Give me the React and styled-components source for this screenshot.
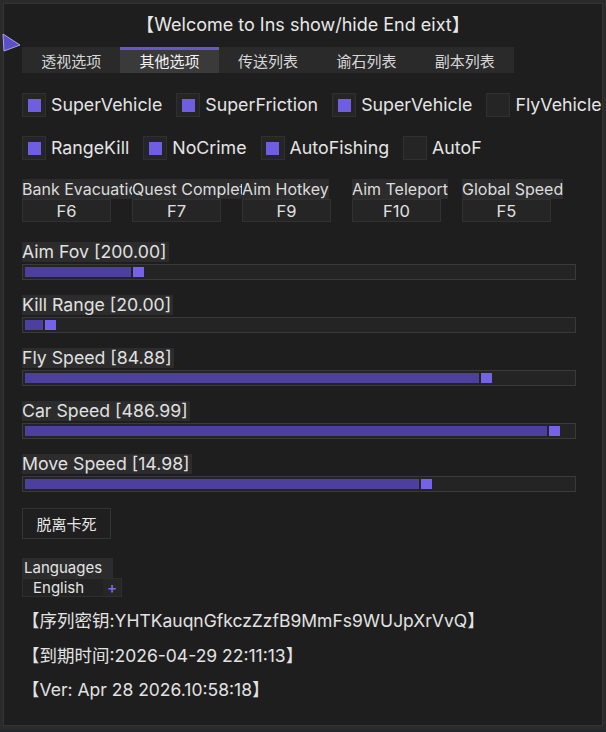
import { createGlobalStyle, styled } from 'styled-components'

const GlobalStyle = createGlobalStyle`
  html, body {
    margin: 0;
    padding: 0;
    background: #2a2a2a;
  }
  body {
    font-family: Inter, "Noto Sans CJK SC", sans-serif;
    color: #e4e4e4;
  }
`

const Screen = styled.div`
  position: relative;
  width: 606px;
  height: 732px;
  padding: 3px 3px 4px 3px;
  box-sizing: border-box;
  background: #2b2b2b;
  border-bottom: 2px solid #1b2a30;
`

const Window = styled.div`
  height: 100%;
  background: #1e1e1e;
  border: 1px solid #333;
  box-sizing: border-box;
  overflow: hidden;
  padding: 10px 0 0 18px;
  display: flex;
  flex-direction: column;
`

const Title = styled.div`
  text-align: center;
  font-size: 18px;
  line-height: 22px;
  padding-right: 18px;
  color: #e8e8e8;
`

const TabBar = styled.div`
  display: flex;
  width: 492px;
  height: 26px;
  margin-top: 11px;
  background: #2a2a2a;
`

const Tab = styled.div`
  flex: 1;
  display: flex;
  align-items: center;
  justify-content: center;
  font-size: 15px;
  box-sizing: border-box;
  color: ${p => (p.$active ? '#f2f2f2' : '#d6d6d6')};
  background: ${p => (p.$active ? '#3a3a3a' : 'transparent')};
  border-top: 3px solid ${p => (p.$active ? '#6657d0' : 'transparent')};
  padding-bottom: 2px;
`

const CheckRow = styled.div`
  display: flex;
  gap: 14px;
  margin-top: ${p => p.$top}px;
  white-space: nowrap;
`

const CheckItem = styled.label`
  display: flex;
  align-items: center;
  gap: 5px;
  font-size: 17.8px;
  line-height: 24px;
`

const Box = styled.span`
  width: 24px;
  height: 24px;
  flex: none;
  box-sizing: border-box;
  background: #252525;
  border: 1px solid #303030;
  display: flex;
  align-items: center;
  justify-content: center;

  &::after {
    content: '';
    width: 13px;
    height: 13px;
    background: ${p => (p.$on ? '#6f5de2' : 'transparent')};
  }
`

const HotkeyGrid = styled.div`
  display: grid;
  grid-template-columns: repeat(5, 110px);
  margin-top: 19px;
`

const HotkeyCell = styled.div`
  display: flex;
  flex-direction: column;
  align-items: flex-start;
  min-width: 0;
`

const FieldLabel = styled.span`
  max-width: 110px;
  overflow: hidden;
  white-space: nowrap;
  background: #2c2c2c;
  font-size: 16px;
  line-height: 20px;
  color: #dcdcdc;
`

const KeyButton = styled.div`
  width: 89px;
  height: 23px;
  box-sizing: border-box;
  background: #252525;
  border: 1px solid #313131;
  display: flex;
  align-items: center;
  justify-content: center;
  font-size: 16.5px;
  color: #e0e0e0;
`

const SliderList = styled.div`
  display: flex;
  flex-direction: column;
  gap: 15px;
  margin-top: 20px;
`

const SliderBlock = styled.div`
  display: flex;
  flex-direction: column;
  align-items: flex-start;
  gap: 2px;
`

const SliderLabel = styled.span`
  background: #2c2c2c;
  font-size: 17.7px;
  line-height: 20px;
  padding-right: 2px;
  color: #e0e0e0;
`

const Track = styled.div`
  width: 554px;
  height: 16px;
  box-sizing: border-box;
  background: #242424;
  border: 1px solid #3a3a3a;
  padding: 2px;
  display: flex;
  gap: 2px;
`

const Fill = styled.div`
  height: 100%;
  background: #4d3f9e;
`

const Grab = styled.div`
  width: 11px;
  height: 100%;
  background: #7462e8;
`

const Button = styled.div`
  margin-top: 16px;
  width: 89px;
  height: 31px;
  box-sizing: border-box;
  border: 1px solid #333;
  background: #1f1f1f;
  display: flex;
  align-items: center;
  justify-content: center;
  font-size: 15px;
  color: #e6e6e6;
`

const LangBlock = styled.div`
  margin-top: 19px;
  display: flex;
  flex-direction: column;
  align-items: flex-start;
`

const LangLabel = styled.span`
  width: 91px;
  background: #2c2c2c;
  font-size: 15px;
  line-height: 20px;
  padding-left: 2px;
  box-sizing: border-box;
`

const Combo = styled.div`
  width: 100px;
  height: 19px;
  box-sizing: border-box;
  border: 1px solid #2e2e2e;
  background: #222;
  display: flex;
  align-items: center;
  font-size: 15px;
`

const ComboText = styled.span`
  flex: 1;
  padding-left: 10px;
  line-height: 17px;
`

const ComboPlus = styled.span`
  width: 18px;
  height: 100%;
  display: flex;
  align-items: center;
  justify-content: center;
  background: #262626;
  color: #7a68ea;
  font-size: 15px;
  font-weight: 600;
`

const InfoList = styled.div`
  margin-top: 13px;
  display: flex;
  flex-direction: column;
  gap: 13.5px;
`

const InfoLine = styled.div`
  font-size: 17.5px;
  line-height: 21px;
  color: #e2e2e2;
`

const Cursor = styled.svg`
  position: absolute;
  left: 1px;
  top: 33px;
`

const tabs = ['透视选项', '其他选项', '传送列表', '谕石列表', '副本列表']

const row1 = [
  ['SuperVehicle', true],
  ['SuperFriction', true],
  ['SuperVehicle', true],
  ['FlyVehicle', false]
]

const row2 = [
  ['RangeKill', true],
  ['NoCrime', true],
  ['AutoFishing', true],
  ['AutoF', false]
]

const hotkeys = [
  ['Bank Evacuation', 'F6'],
  ['Quest Complete', 'F7'],
  ['Aim Hotkey', 'F9'],
  ['Aim Teleport', 'F10'],
  ['Global Speed', 'F5']
]

const sliders = [
  ['Aim Fov [200.00]', 106],
  ['Kill Range [20.00]', 18],
  ['Fly Speed [84.88]', 454],
  ['Car Speed [486.99]', 522],
  ['Move Speed [14.98]', 394]
]

export default function App() {
  return (
    <>
      <GlobalStyle/>
      <Screen>
        <Window>
          <Title>【Welcome to Ins show/hide End eixt】</Title>
          <TabBar>
            {tabs.map((t, i) => <Tab key={t} $active={i === 1}>{t}</Tab>)}
          </TabBar>

          <CheckRow $top={20}>
            {row1.map(([name, on], i) => (
              <CheckItem key={i}><Box $on={on}/>{name}</CheckItem>
            ))}
          </CheckRow>
          <CheckRow $top={19}>
            {row2.map(([name, on], i) => (
              <CheckItem key={i}><Box $on={on}/>{name}</CheckItem>
            ))}
          </CheckRow>

          <HotkeyGrid>
            {hotkeys.map(([label, key]) => (
              <HotkeyCell key={label}>
                <FieldLabel>{label}</FieldLabel>
                <KeyButton>{key}</KeyButton>
              </HotkeyCell>
            ))}
          </HotkeyGrid>

          <SliderList>
            {sliders.map(([label, fill]) => (
              <SliderBlock key={label}>
                <SliderLabel>{label}</SliderLabel>
                <Track>
                  <Fill style={{ width: fill }}/>
                  <Grab/>
                </Track>
              </SliderBlock>
            ))}
          </SliderList>

          <Button>脱离卡死</Button>

          <LangBlock>
            <LangLabel>Languages</LangLabel>
            <Combo>
              <ComboText>English</ComboText>
              <ComboPlus>+</ComboPlus>
            </Combo>
          </LangBlock>

          <InfoList>
            <InfoLine>【序列密钥:YHTKauqnGfkczZzfB9MmFs9WUJpXrVvQ】</InfoLine>
            <InfoLine>【到期时间:2026-04-29 22:11:13】</InfoLine>
            <InfoLine>【Ver: Apr 28 2026.10:58:18】</InfoLine>
          </InfoList>
        </Window>
        <Cursor width="22" height="20" viewBox="0 0 22 20">
          <polygon points="2,1 19,12 3,18" fill="#5a4fc8" stroke="#a9a2e8" strokeWidth="1"/>
        </Cursor>
      </Screen>
    </>
  )
}
